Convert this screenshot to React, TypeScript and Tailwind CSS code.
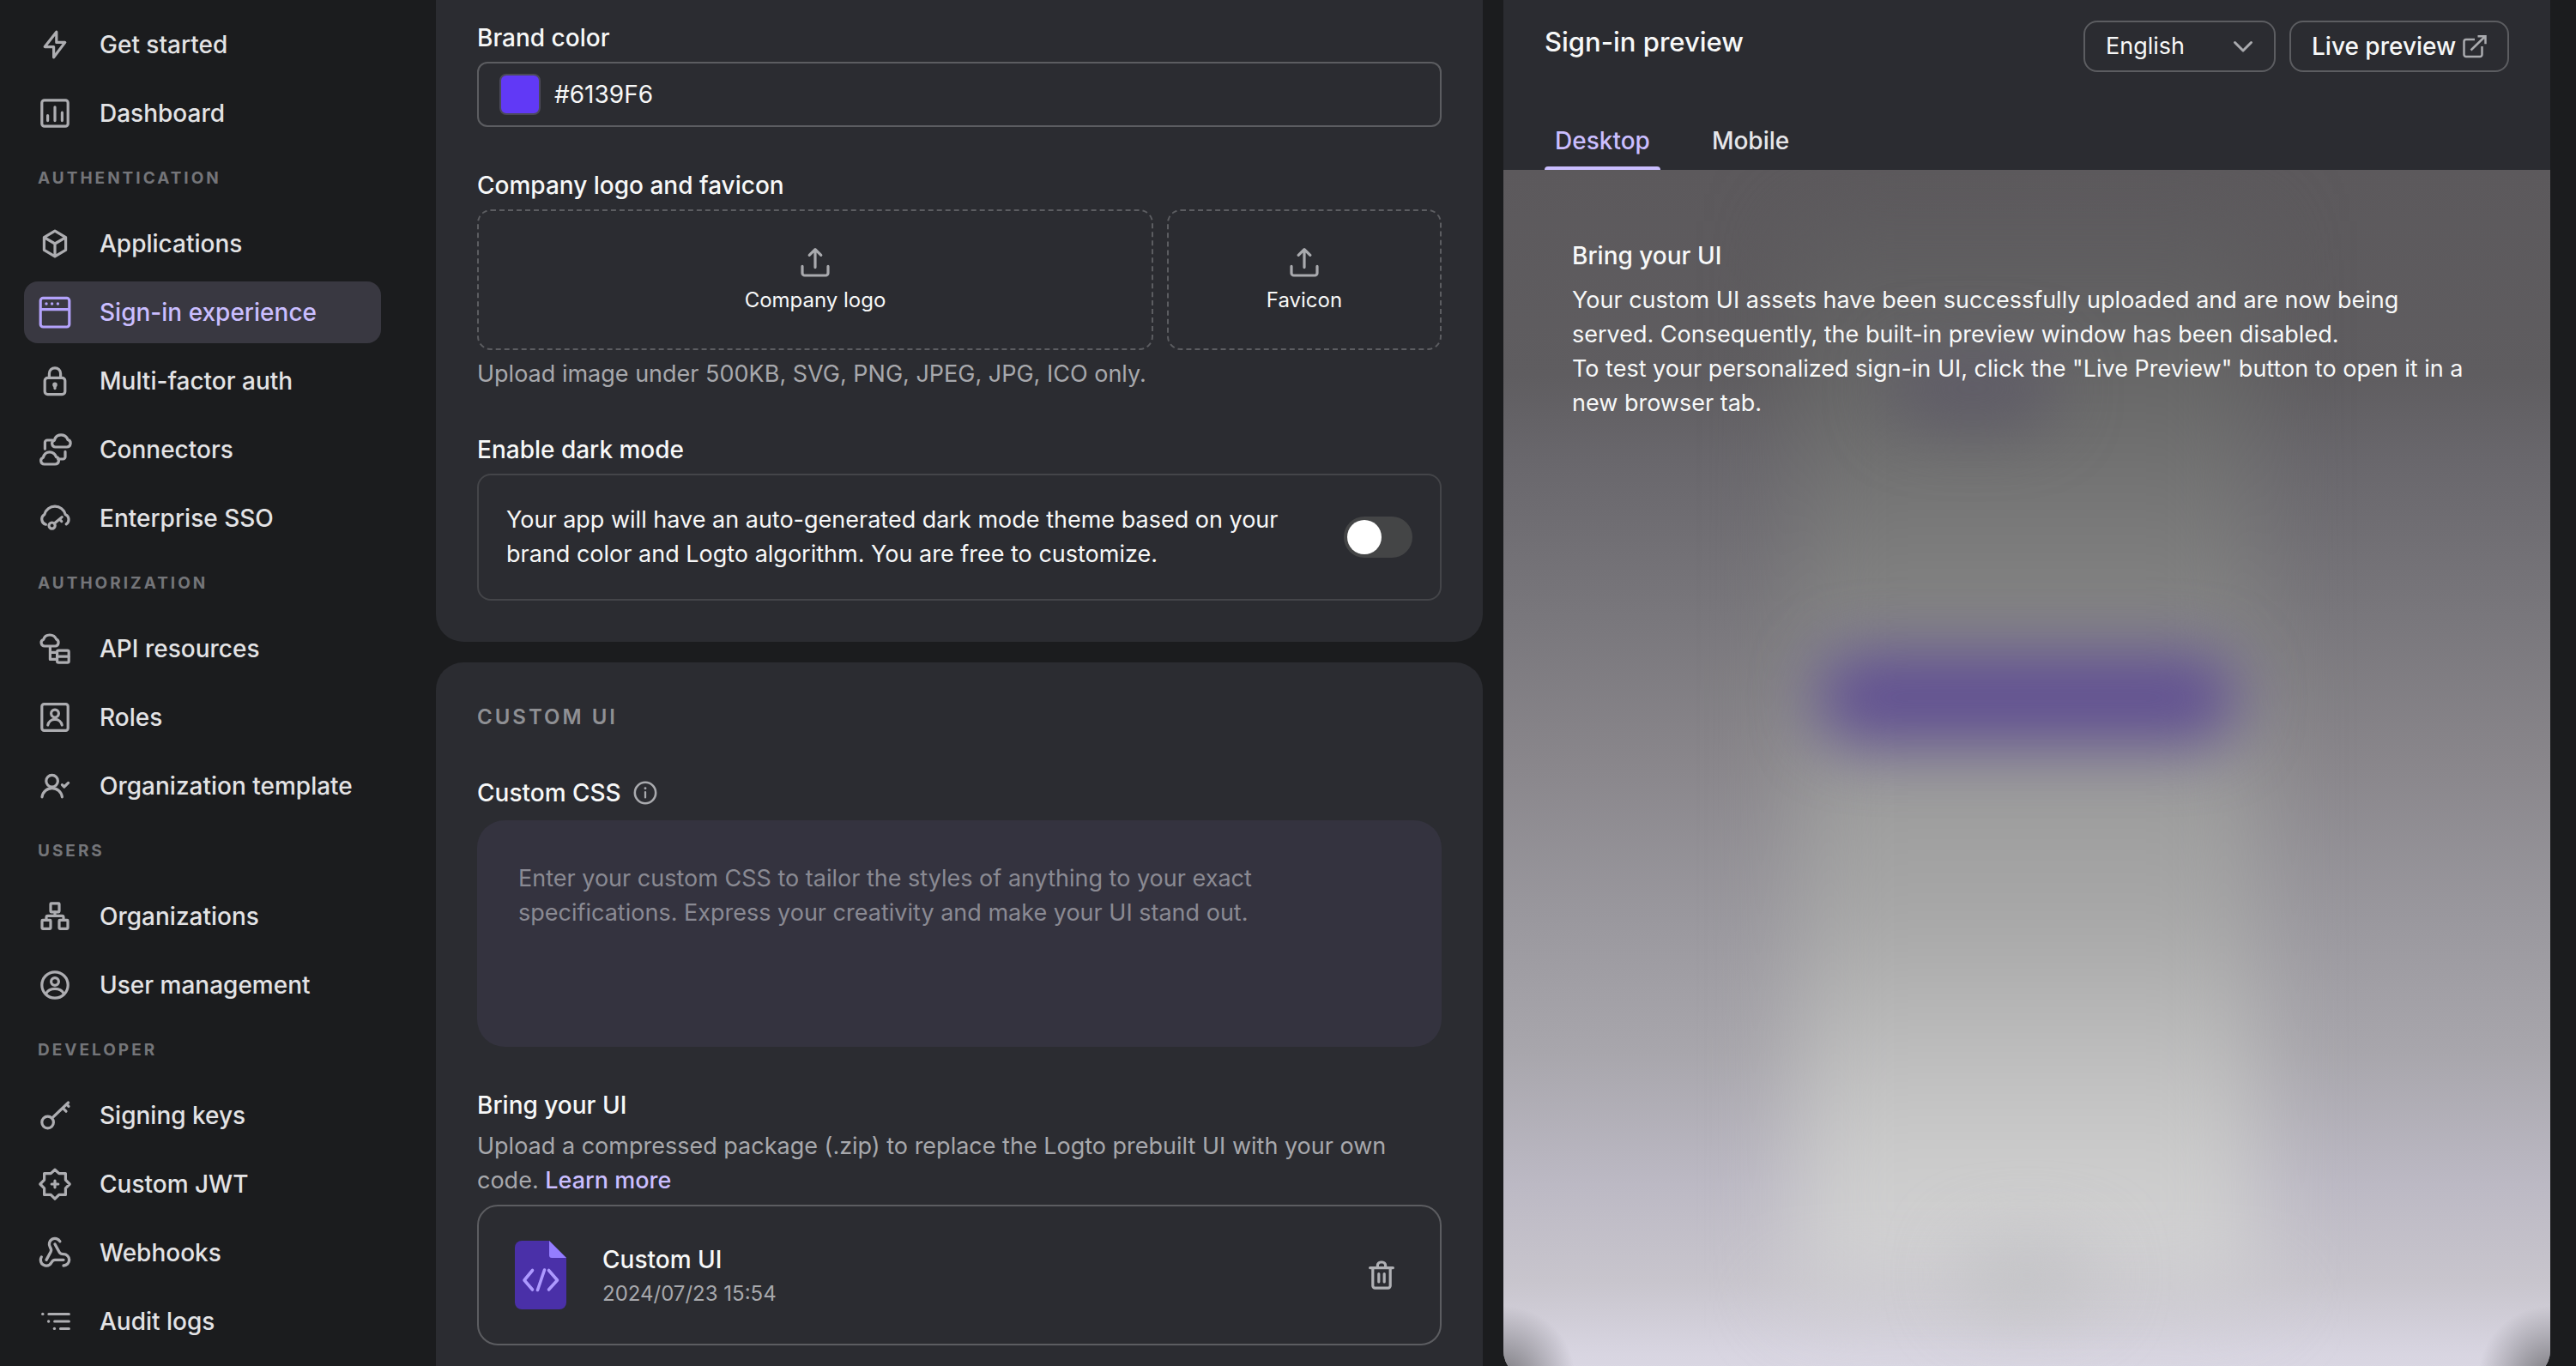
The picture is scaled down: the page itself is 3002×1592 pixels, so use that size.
import { useState, type ReactNode } from "react";
import { Webhook } from "lucide-react";

function Icon({ children, className = "size-10" }: { children: ReactNode; className?: string }) {
  return (
    <svg
      viewBox="0 0 20 20"
      className={`${className} shrink-0`}
      fill="none"
      stroke="currentColor"
      strokeWidth={1.6}
      strokeLinecap="round"
      strokeLinejoin="round"
      aria-hidden="true"
    >
      {children}
    </svg>
  );
}

const BoltIcon = () => (
  <Icon>
    <path d="M10.9 2.6 4.1 11.3h5.2v6.1l6.6-8.7h-5z" />
  </Icon>
);

const DashboardIcon = () => (
  <Icon>
    <rect x="2.4" y="2.4" width="15.2" height="15.2" rx="1.5" />
    <path d="M5.8 11.3v3M10 6.4v7.9M14.2 9.6v4.7" />
  </Icon>
);

const CubeIcon = () => (
  <Icon>
    <path d="M10 2.6 16.3 6.3v7.4L10 17.4l-6.3-3.7V6.3zM3.9 6.4 10 10l6.1-3.6M10 10v7.2" />
  </Icon>
);

const WindowIcon = () => (
  <Icon>
    <rect x="1.6" y="1.7" width="16.8" height="16.8" rx="1.5" />
    <path d="M1.8 8.3h16.4" />
    <g fill="currentColor" stroke="none">
      <circle cx="5" cy="5" r="0.85" />
      <circle cx="8.3" cy="5" r="0.85" />
      <circle cx="11.7" cy="5" r="0.85" />
    </g>
  </Icon>
);

const LockIcon = () => (
  <Icon>
    <rect x="4.1" y="8.2" width="11.8" height="9.6" rx="1.7" />
    <path d="M6.7 8V5.7a3.3 3.3 0 0 1 6.6 0V8" />
    <circle cx="10" cy="12.2" r="0.6" />
    <path d="M10 12.4v1.9" />
  </Icon>
);

const ConnectorsIcon = () => (
  <Icon>
    <path d="M10.3 8.5a2 2 0 0 1-.6-3.9c.4-1.9 1.9-3.2 3.9-3.2 1.8 0 3.3 1.1 3.9 2.8a2.2 2.2 0 0 1-.6 4.3z" />
    <path d="M3.8 18.5a2 2 0 0 1-.6-3.9c.4-1.9 1.9-3.2 3.7-3.2s3.2 1.1 3.8 2.8a2.2 2.2 0 0 1-.6 4.3z" />
    <path d="M4.2 9.6V5.8a1.3 1.3 0 0 1 1.3-1.3h3.2M16 11.2v3a1.3 1.3 0 0 1-1.3 1.3h-2.9" />
  </Icon>
);

const CloudKeyIcon = () => (
  <Icon>
    <path d="M4.7 13.6a3.2 3.2 0 0 1-.8-5.8 6.3 6.3 0 0 1 12.2 0 3.2 3.2 0 0 1 .5 5.6" />
    <circle cx="8.3" cy="14.3" r="1.8" />
    <path d="m9.7 13 4.4-3.7M12.7 10.6l1.2 1.2" />
  </Icon>
);

const ApiIcon = () => (
  <Icon>
    <path d="M4 8.5a2 2 0 0 1-.6-3.9C3.8 3 5.2 2 7 2s3.2 1 3.8 2.5a2.1 2.1 0 0 1-.6 4z" />
    <path d="M7.2 8.8v7.4h3.9M7.2 12.2h3.9" />
    <rect x="11.3" y="11.1" width="6.8" height="7" rx="0.8" />
    <path d="M11.5 14.6h6.4" />
  </Icon>
);

const RolesIcon = () => (
  <Icon>
    <rect x="2.4" y="2.3" width="15.2" height="15.4" rx="1.3" />
    <circle cx="10" cy="7.8" r="2.2" />
    <path d="M5.9 14.5a4.2 4.2 0 0 1 8.2 0" />
  </Icon>
);

const UserCheckIcon = () => (
  <Icon>
    <circle cx="8.3" cy="7.1" r="3.4" />
    <path d="M2.5 16.4a5.9 5.9 0 0 1 11.7 0M14.2 9.3l1.2 1.2 2.4-2.3" />
  </Icon>
);

const OrganizationsIcon = () => (
  <Icon>
    <rect x="7.5" y="2.4" width="5" height="5" rx="0.4" />
    <rect x="2.5" y="12.2" width="5" height="5" rx="0.4" />
    <rect x="12.5" y="12.2" width="5" height="5" rx="0.4" />
    <path d="M10 7.5v2.2M5 12v-1.4a.9.9 0 0 1 .9-.9h8.2a.9.9 0 0 1 .9.9V12" />
  </Icon>
);

const UserCircleIcon = () => (
  <Icon>
    <circle cx="10" cy="10" r="7.6" />
    <circle cx="10" cy="8" r="2.2" />
    <path d="M4.7 15.1c1-1.9 3-2.9 5.3-2.9s4.3 1 5.3 2.9" />
  </Icon>
);

const KeyIcon = () => (
  <Icon>
    <circle cx="5.8" cy="14" r="3.4" />
    <path d="M8.3 11.6 17.8 2.5M14.6 5.7l1.9 1.9M16.9 3.6l1.1 1.1" />
  </Icon>
);

const JwtIcon = () => (
  <Icon>
    <path d="m10 1.6 2.4 2.2h3.8v3.8l2.4 2.4-2.4 2.4v3.8h-3.8L10 18.6l-2.4-2.4H3.8v-3.8L1.4 10l2.4-2.4V3.8h3.8z" />
    <path d="M10 8.1v3.8M8.1 10h3.8" />
  </Icon>
);

const LogsIcon = () => (
  <Icon>
    <path d="M6.4 5.7h11.8M9.8 10h8.4M13.2 14.2h5" strokeWidth="1.5" />
    <g fill="currentColor" stroke="none">
      <circle cx="2.9" cy="5.7" r="0.85" />
      <circle cx="6.3" cy="10" r="0.85" />
      <circle cx="9.7" cy="14.2" r="0.85" />
    </g>
  </Icon>
);

const UploadIcon = () => (
  <Icon>
    <path d="M10 2.5v10.3M6.6 5.7 10 2.3l3.4 3.4M2.5 12.2v3.9a1.4 1.4 0 0 0 1.4 1.4h12.2a1.4 1.4 0 0 0 1.4-1.4v-3.9" />
  </Icon>
);

const TrashIcon = () => (
  <Icon>
    <path d="M3.3 5.8h13.4M4.9 5.9v10.4a1.3 1.3 0 0 0 1.3 1.3h7.6a1.3 1.3 0 0 0 1.3-1.3V5.9M7.7 5.7V4.3a1.8 1.8 0 0 1 1.8-1.8h1a1.8 1.8 0 0 1 1.8 1.8v1.4M8.4 9.3v4.7M11.6 9.3v4.7" />
  </Icon>
);

const InfoIcon = () => (
  <Icon className="size-8">
    <circle cx="10" cy="10" r="7.6" strokeWidth="1.6" />
    <path d="M10 9.4v4" strokeWidth="1.4" />
    <circle cx="10" cy="6.7" r="0.9" fill="currentColor" stroke="none" />
  </Icon>
);

const ExternalIcon = () => (
  <svg
    viewBox="0 0 28 28"
    className="size-7 shrink-0 text-[#aaabaf]"
    fill="none"
    stroke="currentColor"
    strokeWidth={2.5}
    aria-hidden="true"
  >
    <path d="M14 6H4a2.5 2.5 0 0 0-2.5 2.5v15A2.5 2.5 0 0 0 4 26h16a2.5 2.5 0 0 0 2.5-2.5V14M9.5 18.5 26 2.5M17.5 2.2h9v9" />
  </svg>
);

const CodeFileIcon = () => (
  <svg viewBox="0 0 60 80" className="h-20 w-[60px] shrink-0" aria-hidden="true">
    <path d="M8 0h32l20 20v52a8 8 0 0 1-8 8H8a8 8 0 0 1-8-8V8a8 8 0 0 1 8-8z" fill="#4a30a8" />
    <path d="M40 0l20 20H43a3 3 0 0 1-3-3z" fill="#947dff" />
    <path
      d="M20.5 34.5 11 46l9.5 11M34.5 34 26.5 57.5M39.5 34.5 49.5 46l-10 11"
      fill="none"
      stroke="#ad99ff"
      strokeWidth="3.6"
      strokeLinecap="round"
      strokeLinejoin="round"
    />
  </svg>
);

type NavItem = { label: string; icon: ReactNode; active?: boolean };

const navGroups: { title?: string; items: NavItem[] }[] = [
  {
    items: [
      { label: "Get started", icon: <BoltIcon /> },
      { label: "Dashboard", icon: <DashboardIcon /> },
    ],
  },
  {
    title: "AUTHENTICATION",
    items: [
      { label: "Applications", icon: <CubeIcon /> },
      { label: "Sign-in experience", icon: <WindowIcon />, active: true },
      { label: "Multi-factor auth", icon: <LockIcon /> },
      { label: "Connectors", icon: <ConnectorsIcon /> },
      { label: "Enterprise SSO", icon: <CloudKeyIcon /> },
    ],
  },
  {
    title: "AUTHORIZATION",
    items: [
      { label: "API resources", icon: <ApiIcon /> },
      { label: "Roles", icon: <RolesIcon /> },
      { label: "Organization template", icon: <UserCheckIcon /> },
    ],
  },
  {
    title: "USERS",
    items: [
      { label: "Organizations", icon: <OrganizationsIcon /> },
      { label: "User management", icon: <UserCircleIcon /> },
    ],
  },
  {
    title: "DEVELOPER",
    items: [
      { label: "Signing keys", icon: <KeyIcon /> },
      { label: "Custom JWT", icon: <JwtIcon /> },
      { label: "Webhooks", icon: <Webhook className="size-10 shrink-0" strokeWidth={2} aria-hidden="true" /> },
      { label: "Audit logs", icon: <LogsIcon /> },
    ],
  },
];

function Sidebar() {
  return (
    <nav className="w-[508px] shrink-0 pt-4 pr-16 pl-7" aria-label="Console">
      {navGroups.map((group) => (
        <section key={group.title ?? "overview"}>
          {group.title && (
            <h2 className="flex h-18 items-center pb-2 pl-4 text-[19px] font-bold tracking-[3px] text-[#747579]">
              {group.title}
            </h2>
          )}
          <ul>
            {group.items.map((item) => (
              <li key={item.label} className="mb-2">
                <a
                  href="#"
                  aria-current={item.active ? "page" : undefined}
                  className={
                    item.active
                      ? "flex h-18 items-center gap-8 rounded-2xl bg-[#393841] px-4 font-medium text-[#cabeff]"
                      : "flex h-18 items-center gap-8 rounded-2xl px-4 font-medium text-[#e3e3e5]"
                  }
                >
                  <span className={item.active ? "text-[#b3a2fb]" : "text-[#adadb1]"}>{item.icon}</span>
                  {item.label}
                </a>
              </li>
            ))}
          </ul>
        </section>
      ))}
    </nav>
  );
}

function UploadBox({ label, className }: { label: string; className: string }) {
  return (
    <button
      type="button"
      className={`${className} flex h-[164px] flex-col items-center justify-center gap-2 rounded-2xl border-2 border-dashed border-[#5c5d61] text-[24px] leading-8`}
    >
      <span className="text-[#a9aaae]">
        <UploadIcon />
      </span>
      {label}
    </button>
  );
}

function BrandingCard() {
  const [dark, setDark] = useState(false);
  return (
    <section className="flex flex-col gap-12 rounded-b-4xl bg-[#2b2c31] px-12 pt-6 pb-12">
      <div className="flex flex-col gap-2">
        <label htmlFor="brand-color" className="font-medium">
          Brand color
        </label>
        <div className="flex h-19 items-center gap-4 rounded-xl border-2 border-[#5c5d61] px-6">
          <button
            type="button"
            aria-label="Pick a color"
            className="size-12 rounded-lg border-2 border-[#4b4a58] bg-[#6139f6]"
          />
          <input id="brand-color" defaultValue="#6139F6" className="min-w-0 flex-1 bg-transparent outline-none" />
        </div>
      </div>

      <div className="flex flex-col gap-2">
        <h3 className="font-medium">Company logo and favicon</h3>
        <div className="flex gap-4">
          <UploadBox label="Company logo" className="flex-1" />
          <UploadBox label="Favicon" className="w-80" />
        </div>
        <p className="text-[27px] text-[#a7a8ac]">Upload image under 500KB, SVG, PNG, JPEG, JPG, ICO only.</p>
      </div>

      <div className="flex flex-col gap-2">
        <h3 className="font-medium">Enable dark mode</h3>
        <label className="flex items-center justify-between gap-12 rounded-2xl border-2 border-[#444549] p-8">
          <span className="text-[27px]">
            Your app will have an auto-generated dark mode theme based on your brand color and Logto algorithm. You are
            free to customize.
          </span>
          <span className="flex h-12 w-20 shrink-0 rounded-full bg-[#444546] p-1 has-checked:justify-end has-checked:bg-[#6139f6]">
            <input
              type="checkbox"
              role="switch"
              className="sr-only"
              checked={dark}
              onChange={(event) => setDark(event.target.checked)}
            />
            <span className="size-10 rounded-full bg-white" />
          </span>
        </label>
      </div>
    </section>
  );
}

function CustomUiCard() {
  return (
    <section className="flex flex-1 flex-col rounded-t-4xl bg-[#2b2c31] p-12">
      <h2 className="text-[24px] leading-8 font-semibold tracking-[3px] text-[#8f9094]">CUSTOM UI</h2>

      <div className="mt-13 flex items-center gap-3">
        <label htmlFor="custom-css" className="font-medium">
          Custom CSS
        </label>
        <button type="button" aria-label="About custom CSS" className="text-[#a9aaae]">
          <InfoIcon />
        </button>
      </div>
      <textarea
        id="custom-css"
        className="mt-3 h-[264px] resize-none rounded-4xl bg-[#34333f] p-12 text-[27px] outline-none placeholder:text-[#8a8a93]"
        placeholder="Enter your custom CSS to tailor the styles of anything to your exact specifications. Express your creativity and make your UI stand out."
      />

      <h3 className="mt-12 font-medium">Bring your UI</h3>
      <p className="mt-2 text-[27px] text-[#a7a8ac]">
        Upload a compressed package (.zip) to replace the Logto prebuilt UI with your own code.{" "}
        <a href="#" className="font-medium text-[#cabeff]">
          Learn more
        </a>
      </p>
      <div className="mt-2 flex h-[164px] shrink-0 items-center rounded-3xl border-2 border-[#5c5d61] pr-12 pl-[42px]">
        <CodeFileIcon />
        <div className="ml-[42px] flex flex-1 flex-col gap-1">
          <p className="font-medium">Custom UI</p>
          <p className="text-[24px] leading-8 text-[#a7a8ac]">2024/07/23 15:54</p>
        </div>
        <button type="button" aria-label="Delete Custom UI" className="text-[#b0b1b5]">
          <TrashIcon />
        </button>
      </div>
    </section>
  );
}

function PreviewPanel() {
  return (
    <section className="-mb-3.5 flex min-w-0 flex-1 flex-col overflow-hidden rounded-b-4xl bg-[#2b2c31]">
      <header className="flex items-start justify-between px-12 pt-6">
        <h2 className="text-[31px] leading-[50px] font-medium">Sign-in preview</h2>
        <div className="flex gap-4">
          <div className="relative flex">
            <select
              aria-label="Preview language"
              className="h-15 w-56 appearance-none rounded-2xl border-2 border-[#5c5d61] bg-transparent pl-6 text-[27px] outline-none"
            >
              <option>English</option>
            </select>
            <svg
              viewBox="0 0 24 24"
              className="pointer-events-none absolute top-[18px] right-[26px] size-6 text-[#a9aaae]"
              fill="none"
              stroke="currentColor"
              strokeWidth={3}
              strokeLinecap="round"
              strokeLinejoin="round"
              aria-hidden="true"
            >
              <path d="m2.5 7.5 9.5 9.5 9.5-9.5" />
            </svg>
          </div>
          <button
            type="button"
            className="flex h-15 w-64 items-center justify-between rounded-2xl border-2 border-[#5c5d61] px-6 font-medium whitespace-nowrap"
          >
            Live preview
            <ExternalIcon />
          </button>
        </div>
      </header>

      <div role="tablist" className="mt-15 flex gap-12 px-12">
        <button type="button" role="tab" aria-selected="true" className="relative px-3 pb-3.5 font-medium text-[#cabeff]">
          Desktop
          <span className="absolute inset-x-0 bottom-0 h-1 rounded-t bg-[#cabeff]" />
        </button>
        <button type="button" role="tab" aria-selected="false" className="px-3 pb-3.5 font-medium text-[#e6e6e9]">
          Mobile
        </button>
      </div>

      <div className="relative flex-1 overflow-hidden bg-[linear-gradient(to_bottom,#5c595c_0%,#5f5d60_17%,#69676c_24%,#79777c_37%,#89868b_49%,#9a989e_62%,#a8a6ac_73%,#bcb9c4_84%,#c8c5cd_92%,#d8d5e1_98%,#dbd8e4_100%)]">
        <div className="absolute top-[60px] bottom-[90px] left-1/2 w-[540px] -translate-x-1/2 bg-[linear-gradient(to_bottom,#5d5b5e_0%,#666666_14%,#747474_24%,#838383_36%,#9f9f9f_55%,#a6a6a6_64%,#bbbbbb_76%,#c9c9c9_85%,#d0d0d0_92%,#d2d1d5_100%)] blur-[48px]" />
        <div className="absolute top-[210px] left-[37%] h-[90px] w-48 rounded-full bg-[#5f5c67] blur-[36px]" />
        <div className="absolute top-[562px] left-1/2 h-[106px] w-[490px] -translate-x-1/2 rounded-[48px] bg-[#604f92] blur-[36px]" />
        <div className="absolute bottom-20 left-1/2 h-20 w-40 -translate-x-1/2 rounded-full bg-[#c3c3c6] blur-[40px]" />
        <div className="absolute inset-x-0 bottom-0 h-28 bg-[radial-gradient(circle_at_bottom_left,#7c7b80_0,#7c7b8099_35px,#7c7b8000_84px),radial-gradient(circle_at_bottom_right,#7c7b80_0,#7c7b8099_35px,#7c7b8000_84px)]" />
        <div className="relative px-20 pt-20">
          <h3 className="font-medium">Bring your UI</h3>
          <p className="mt-3 text-[27px]">
            Your custom UI assets have been successfully uploaded and are now being served. Consequently, the built-in
            preview window has been disabled.
            <br />
            To test your personalized sign-in UI, click the "Live Preview" button to open it in a new browser tab.
          </p>
        </div>
      </div>
    </section>
  );
}

export default function App() {
  return (
    <div className="flex h-screen overflow-hidden bg-[#1b1c1e] pr-[30px] font-['Inter',sans-serif] text-[28px] leading-10 text-[#f7f8f8]">
      <Sidebar />
      <main className="flex min-w-0 flex-1 gap-6">
        <div className="flex min-w-0 flex-1 flex-col gap-6">
          <BrandingCard />
          <CustomUiCard />
        </div>
        <PreviewPanel />
      </main>
    </div>
  );
}
